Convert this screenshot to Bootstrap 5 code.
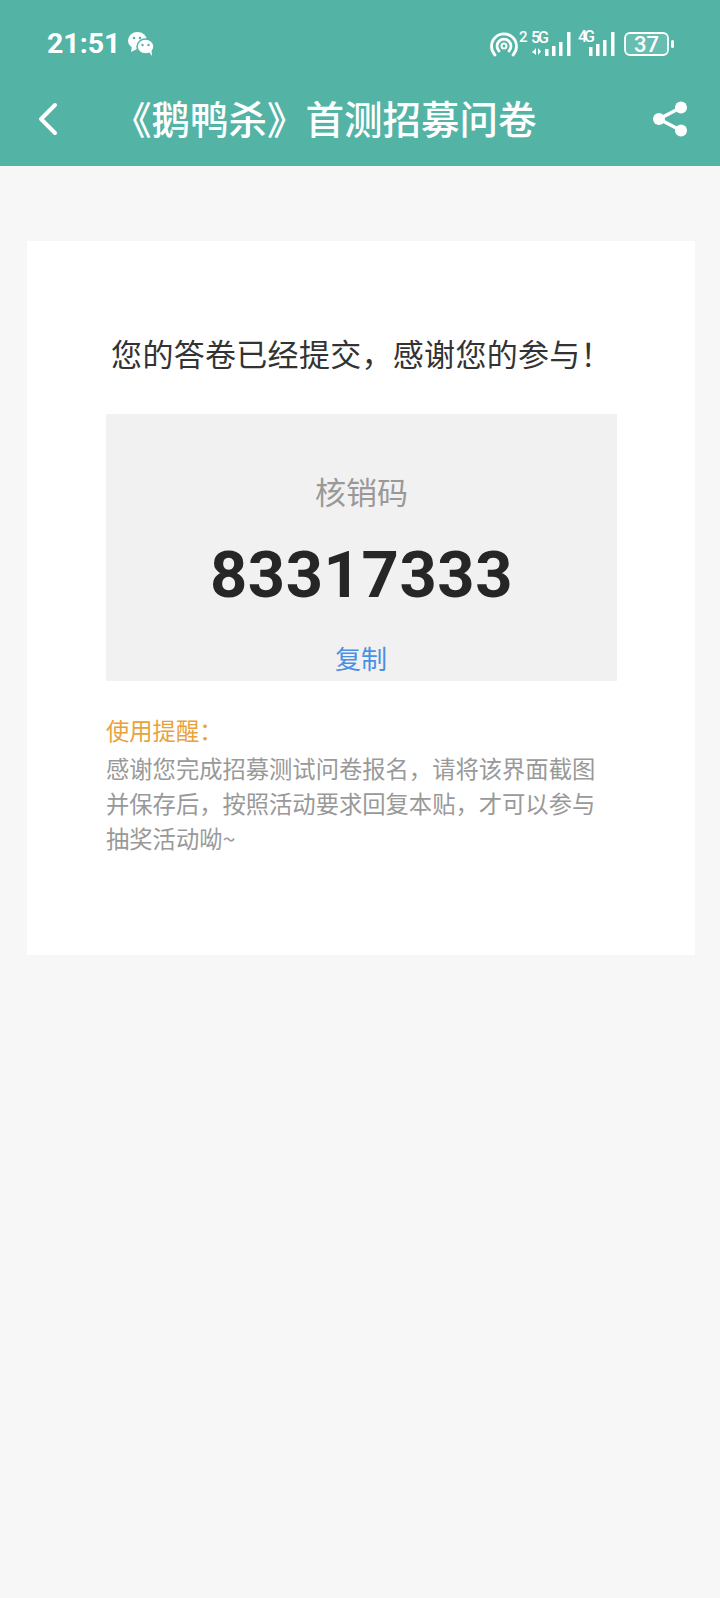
<!DOCTYPE html>
<html lang="zh">
<head>
<meta charset="utf-8">
<title>《鹅鸭杀》首测招募问卷</title>
<link href="https://cdn.jsdelivr.net/npm/bootstrap@5.3.0/dist/css/bootstrap.min.css" rel="stylesheet">
<style>
html,body{height:100%}
body{background:#f7f7f7;font-family:"Noto Sans CJK SC","Noto Sans",sans-serif;width:720px;height:1598px;overflow:hidden}
.app-head{background:#53b4a6;height:166px;color:#fff}
.status-row{height:78px;padding:10px 46px 0 47px}
.clock{font:700 28.5px/1 Roboto,sans-serif}
.wechat-mark{margin-left:7px}
.title-row{height:88px;padding:0 32px 6px 36px}
.page-title{font-size:38.5px;font-weight:500;line-height:1;margin:0 0 3px 53px;white-space:nowrap;width:440px}
.sheet{background:#fff;margin:75px 25px 0 27px;height:714px;padding:90px 78px 0 79px}
.thanks{font-size:31px;line-height:44px;letter-spacing:.3px;color:#333;text-align:center;margin:0 -10px 39px;white-space:nowrap}
.code-box{background:#f1f1f1;height:267px;text-align:center;padding-top:55px}
.code-label{font-size:31px;line-height:44px;color:#999}
.code-num{font:700 65px/78px Roboto,sans-serif;letter-spacing:.6px;color:#262626;margin-top:23px}
.code-copy{font-size:26px;line-height:38px;color:#4a90e2;margin-top:25px;margin-right:1px}
.tip-head{font-size:23.300px;line-height:34px;color:#e9a23b;margin-top:32px}
.tip-text{font-size:23.300px;line-height:35.200px;color:#999;margin-top:4px;width:495px}
</style>
</head>
<body>
<header class="app-head">
  <div class="status-row d-flex align-items-center justify-content-between">
    <div class="d-flex align-items-center">
      <span class="clock">21:51</span>
      <svg class="wechat-mark" width="28" height="26" viewBox="0 0 28 26" fill="#fff"><ellipse cx="10.500" cy="9.500" rx="9.500" ry="8.500"/><path d="M5 15l-1 6 6-3z"/><ellipse cx="18.500" cy="15.500" rx="8.500" ry="7.500" stroke="#53b4a6" stroke-width="1.500"/><path d="M22 21l3 4-.5-6z"/><circle cx="7" cy="7" r="1.300" fill="#53b4a6"/><circle cx="13" cy="7" r="1.300" fill="#53b4a6"/><circle cx="15.500" cy="14" r="1.200" fill="#53b4a6"/><circle cx="21.500" cy="14" r="1.200" fill="#53b4a6"/></svg>
    </div>
    <svg width="184" height="34" viewBox="0 -4 184 34" fill="#fff" font-family="Roboto,sans-serif" font-weight="500">
      <g fill="none" stroke="#fff" stroke-width="2.800" stroke-linecap="round"><path d="M5 24a12.500 12.500 0 1 1 18 0"/><path d="M9 20a7 7 0 1 1 10 0"/></g><circle cx="14" cy="15" r="2.500" fill="none" stroke="#fff" stroke-width="2"/>
      <text x="29" y="11" font-size="15">2</text>
      <text x="41" y="12" font-size="16" textLength="18">5G</text>
      <path d="M46 17v7l-3-2.500-1 0v-1h1zM48 17v7l3-3.500z"/>
      <rect x="55" y="18" width="3.500" height="7"/><rect x="62" y="15" width="3.500" height="10"/><rect x="69" y="11" width="3.500" height="14"/><rect x="77" y="1" width="3.500" height="24"/>
      <text x="88" y="11" font-size="16" textLength="17">4G</text>
      <rect x="99" y="16" width="3.500" height="9"/><rect x="106" y="13" width="3.500" height="12"/><rect x="113" y="9" width="3.500" height="16"/><rect x="121" y="1" width="3.500" height="24"/>
      <rect x="135" y="2" width="43" height="22" rx="5" fill="#fff" fill-opacity=".12" stroke="#fff" stroke-width="1.800"/>
      <text x="156.500" y="21" font-size="22" text-anchor="middle">37</text>
      <rect x="181" y="9" width="3" height="8" rx="1.500"/>
    </svg>
  </div>
  <div class="title-row d-flex align-items-center">
    <svg width="24" height="34" viewBox="0 0 24 34" fill="none" stroke="#fff" stroke-width="4" stroke-linecap="round" stroke-linejoin="round" class="flex-shrink-0"><path d="M19 3L5 17l14 14"/></svg>
    <h1 class="page-title">《鹅鸭杀》首测招募问卷</h1>
    <svg class="ms-auto flex-shrink-0" width="36" height="38" viewBox="0 0 36 38" fill="#fff"><circle cx="29" cy="7.500" r="6"/><circle cx="7" cy="19" r="6"/><circle cx="29" cy="30.500" r="6"/><path d="M7 19L29 7.500M7 19l22 11.500" stroke="#fff" stroke-width="3.500"/></svg>
  </div>
</header>
<main class="sheet">
  <p class="thanks">您的答卷已经提交，感谢您的参与！</p>
  <div class="code-box">
    <div class="code-label">核销码</div>
    <div class="code-num">83317333</div>
    <div class="code-copy">复制</div>
  </div>
  <div class="tip-head">使用提醒：</div>
  <div class="tip-text">感谢您完成招募测试问卷报名，请将该界面截图并保存后，按照活动要求回复本贴，才可以参与抽奖活动呦~</div>
</main>
<script src="https://cdn.jsdelivr.net/npm/bootstrap@5.3.0/dist/js/bootstrap.bundle.min.js"></script>
</body>
</html>
